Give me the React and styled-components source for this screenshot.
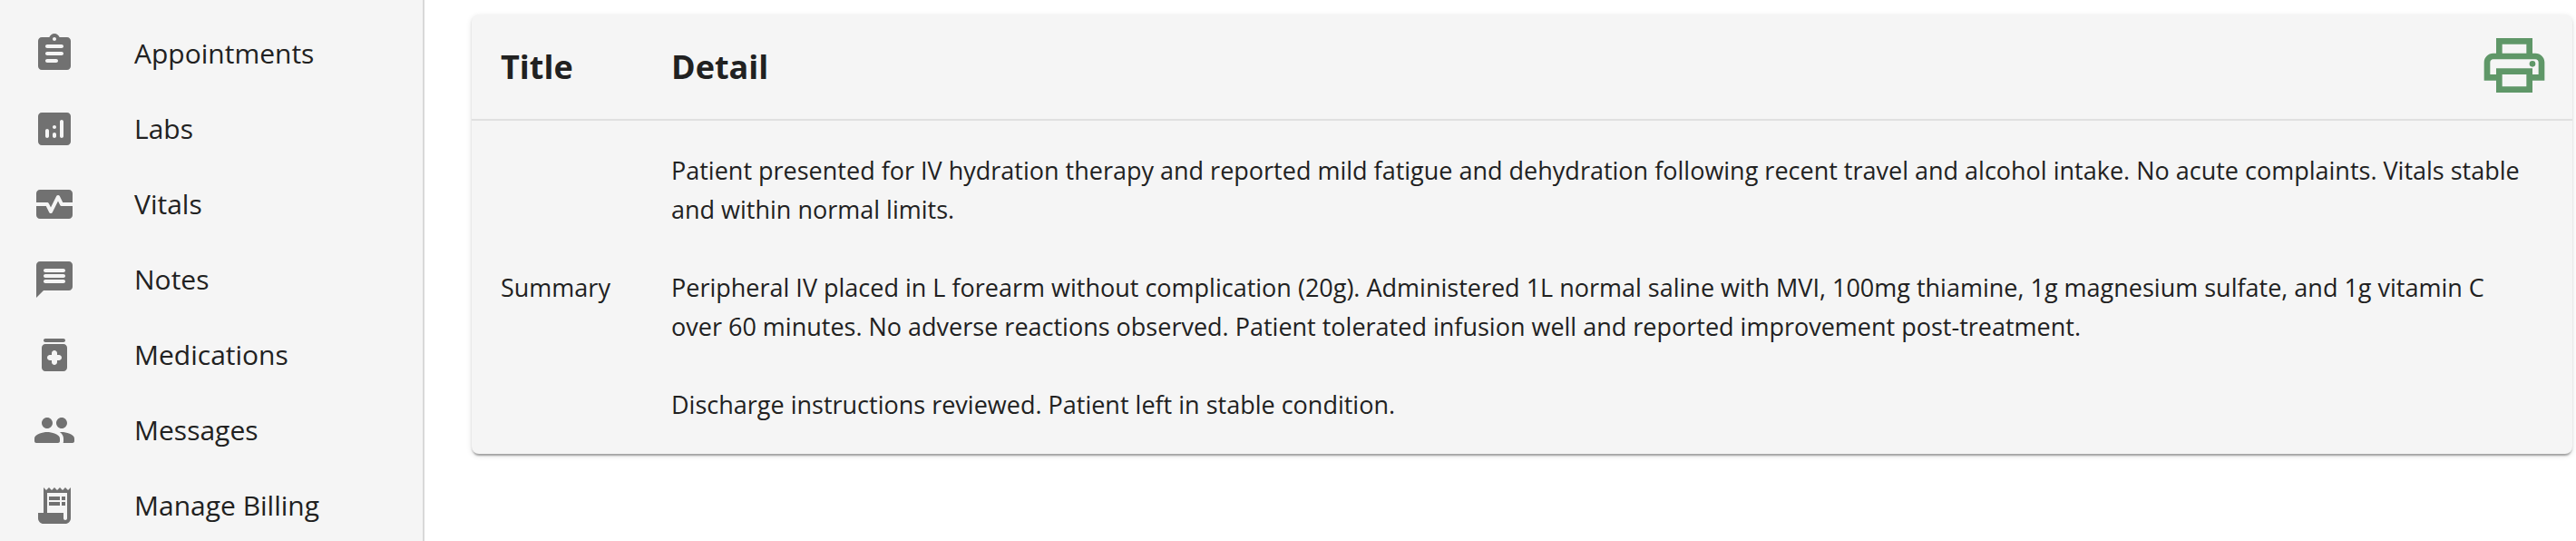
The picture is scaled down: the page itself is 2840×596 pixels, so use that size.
import React from "react";
import styled, { createGlobalStyle } from "styled-components";

const GlobalStyle = createGlobalStyle`
  * {
    box-sizing: border-box;
  }
  body {
    margin: 0;
    background: #fff;
    color: #212121;
    font-family: "Segoe UI", "Open Sans", "Noto Sans", sans-serif;
  }
`;

const Page = styled.div`
  display: flex;
  height: 100vh;
  overflow: hidden;
`;

const Sidebar = styled.nav`
  flex: 0 0 468px;
  padding-top: 17px;
  overflow: hidden;
  background: #f5f5f5;
  border-right: 2px solid #d8d8d8;
`;

const NavList = styled.ul`
  margin: 0;
  padding: 0;
  list-style: none;
`;

const NavLink = styled.a`
  display: flex;
  align-items: center;
  gap: 64px;
  height: 83px;
  padding: 0 36px;
  color: inherit;
  font-size: 30px;
  line-height: 48px;
  text-decoration: none;

  &:hover {
    background: #ebebeb;
  }
`;

const Icon = styled.svg`
  flex: none;
  width: ${(props) => props.$size}px;
  height: ${(props) => props.$size}px;
  fill: ${(props) => props.$color};
`;

const Main = styled.main`
  flex: 1;
  min-width: 0;
  padding: 16px 4px 16px 52px;
`;

const Card = styled.section`
  overflow: hidden;
  background: #f5f5f5;
  border-radius: 8px;
  box-shadow: 0 4px 2px -2px rgba(0, 0, 0, 0.2),
    0 2px 2px 0 rgba(0, 0, 0, 0.14), 0 2px 6px 0 rgba(0, 0, 0, 0.12);
`;

const Table = styled.table`
  width: 100%;
  table-layout: fixed;
  border-collapse: separate;
  border-spacing: 0;
`;

const HeadCell = styled.th`
  width: ${(props) => props.$width || "auto"};
  height: 117px;
  padding: 0 24px 0 32px;
  border-bottom: 2px solid #e0e0e0;
  font-size: 36px;
  font-weight: 700;
  line-height: 56px;
  text-align: left;
`;

const HeadRow = styled.div`
  display: flex;
  align-items: center;
  justify-content: space-between;
`;

const Cell = styled.td`
  padding: 33px ${(props) => props.$right || "32px"} 33px 32px;
  font-size: 27px;
  line-height: 43px;
  white-space: pre-line;
`;

const PrintButton = styled.button`
  display: flex;
  padding: 0 0 4px;
  border: 0;
  background: none;
  cursor: pointer;
`;

const navItems = [
  {
    label: "Appointments",
    path: "M19 3h-4.18C14.4 1.84 13.3 1 12 1s-2.4.84-2.82 2H5c-1.1 0-2 .9-2 2v14c0 1.1.9 2 2 2h14c1.1 0 2-.9 2-2V5c0-1.1-.9-2-2-2zm-7 0c.55 0 1 .45 1 1s-.45 1-1 1-1-.45-1-1 .45-1 1-1zm1 14H8c-.55 0-1-.45-1-1s.45-1 1-1h5c.55 0 1 .45 1 1s-.45 1-1 1zm3-4H8c-.55 0-1-.45-1-1s.45-1 1-1h8c.55 0 1 .45 1 1s-.45 1-1 1zm0-4H8c-.55 0-1-.45-1-1s.45-1 1-1h8c.55 0 1 .45 1 1s-.45 1-1 1z",
  },
  {
    label: "Labs",
    path: "M19 3H5c-1.1 0-2 .9-2 2v14c0 1.1.9 2 2 2h14c1.1 0 2-.9 2-2V5c0-1.1-.9-2-2-2zM8 17c-.55 0-1-.45-1-1v-3c0-.55.45-1 1-1s1 .45 1 1v3c0 .55-.45 1-1 1zm4 0c-.55 0-1-.45-1-1v-1c0-.55.45-1 1-1s1 .45 1 1v1c0 .55-.45 1-1 1zm0-5c-.55 0-1-.45-1-1s.45-1 1-1 1 .45 1 1-.45 1-1 1zm4 5c-.55 0-1-.45-1-1V8c0-.55.45-1 1-1s1 .45 1 1v8c0 .55-.45 1-1 1z",
  },
  {
    label: "Vitals",
    path: "M15.11 12.45 14 10.24l-3.11 6.21c-.16.34-.51.55-.89.55s-.73-.21-.89-.55L7.38 13H2v5c0 1.1.9 2 2 2h16c1.1 0 2-.9 2-2v-5h-6c-.38 0-.73-.21-.89-.55zM20 4H4c-1.1 0-2 .9-2 2v5h6c.38 0 .73.21.89.55L10 13.76l3.11-6.21c.34-.68 1.45-.68 1.79 0L16.62 11H22V6c0-1.1-.9-2-2-2z",
  },
  {
    label: "Notes",
    path: "M20 2H4c-1.1 0-1.99.9-1.99 2L2 22l4-4h14c1.1 0 2-.9 2-2V4c0-1.1-.9-2-2-2zm-3 12H7c-.55 0-1-.45-1-1s.45-1 1-1h10c.55 0 1 .45 1 1s-.45 1-1 1zm0-3H7c-.55 0-1-.45-1-1s.45-1 1-1h10c.55 0 1 .45 1 1s-.45 1-1 1zm0-3H7c-.55 0-1-.45-1-1s.45-1 1-1h10c.55 0 1 .45 1 1s-.45 1-1 1z",
  },
  {
    label: "Medications",
    path: "M17 6H7c-1.1 0-2 .9-2 2v11c0 1.1.9 2 2 2h10c1.1 0 2-.9 2-2V8c0-1.1-.9-2-2-2zm-2.5 9h-1v1c0 .83-.67 1.5-1.5 1.5s-1.5-.67-1.5-1.5v-1h-1c-.83 0-1.5-.67-1.5-1.5S8.67 12 9.5 12h1v-1c0-.83.67-1.5 1.5-1.5s1.5.67 1.5 1.5v1h1c.83 0 1.5.67 1.5 1.5s-.67 1.5-1.5 1.5zM7 3h10c.55 0 1 .45 1 1s-.45 1-1 1H7c-.55 0-1-.45-1-1s.45-1 1-1z",
  },
  {
    label: "Messages",
    path: "M16 11c1.66 0 2.99-1.34 2.99-3S17.66 5 16 5s-3 1.34-3 3 1.34 3 3 3zm-8 0c1.66 0 2.99-1.34 2.99-3S9.66 5 8 5 5 6.34 5 8s1.34 3 3 3zm0 2c-2.33 0-7 1.17-7 3.5V18c0 .55.45 1 1 1h12c.55 0 1-.45 1-1v-1.5c0-2.33-4.67-3.5-7-3.5zm8 0c-.29 0-.62.02-.97.05.02.01.03.03.04.04 1.14.83 1.93 1.94 1.93 3.41V18c0 .35-.07.69-.18 1H22c.55 0 1-.45 1-1v-1.5c0-2.33-4.67-3.5-7-3.5z",
  },
  {
    label: "Manage Billing",
    path: "M19.5 3.5 18 2l-1.5 1.5L15 2l-1.5 1.5L12 2l-1.5 1.5L9 2 7.5 3.5 6 2v14H3v3c0 1.66 1.34 3 3 3h12c1.66 0 3-1.34 3-3V2l-1.5 1.5zM19 19c0 .55-.45 1-1 1s-1-.45-1-1v-3H8V5h11v14zM9 7h6v2H9zM16 7h2v2h-2zM9 10h6v2H9zM16 10h2v2h-2z",
  },
];

const summary = [
  "Patient presented for IV hydration therapy and reported mild fatigue and dehydration following recent travel and alcohol intake. No acute complaints. Vitals stable and within normal limits.",
  "Peripheral IV placed in L forearm without complication (20g). Administered 1L normal saline with MVI, 100mg thiamine, 1g magnesium sulfate, and 1g vitamin C over 60 minutes. No adverse reactions observed. Patient tolerated infusion well and reported improvement post-treatment.",
  "Discharge instructions reviewed. Patient left in stable condition.",
].join("\n\n");

const SideMenu = () => (
  <Sidebar>
    <NavList>
      {navItems.map((item) => (
        <li key={item.label}>
          <NavLink href="#">
            <Icon viewBox="0 0 24 24" $size={48} $color="#717171" aria-hidden="true">
              <path d={item.path} />
            </Icon>
            {item.label}
          </NavLink>
        </li>
      ))}
    </NavList>
  </Sidebar>
);

const App = () => {
  return (
    <>
      <GlobalStyle />
      <Page>
        <SideMenu />
        <Main>
          <Card>
            <Table>
              <thead>
                <tr>
                  <HeadCell scope="col" $width="188px">Title</HeadCell>
                  <HeadCell scope="col">
                    <HeadRow>
                      Detail
                      <PrintButton type="button" aria-label="Print" onClick={() => window.print()}>
                        <Icon viewBox="0 0 24 24" $size={80} $color="#5f9768" aria-hidden="true">
                          <path d="M19 8h-1V3H6v5H5c-1.66 0-3 1.34-3 3v6h4v4h12v-4h4v-6c0-1.66-1.34-3-3-3zM8 5h8v3H8V5zm8 12v2H8v-4h8v2zm2-2v-2H6v2H4v-4c0-.55.45-1 1-1h14c.55 0 1 .45 1 1v4h-2z" />
                          <circle cx="18" cy="11.5" r="1" />
                        </Icon>
                      </PrintButton>
                    </HeadRow>
                  </HeadCell>
                </tr>
              </thead>
              <tbody>
                <tr>
                  <Cell>Summary</Cell>
                  <Cell $right="40px">{summary}</Cell>
                </tr>
              </tbody>
            </Table>
          </Card>
        </Main>
      </Page>
    </>
  );
};

export default App;
